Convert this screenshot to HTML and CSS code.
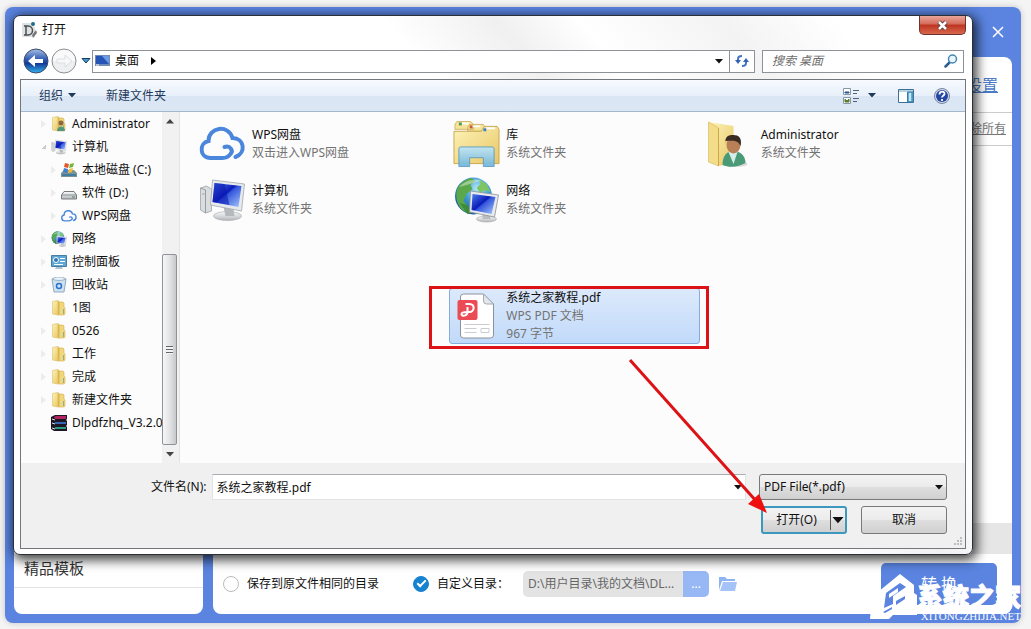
FILE: index.html
```html
<!DOCTYPE html>
<html lang="zh-CN">
<head>
    <meta charset="utf-8">
    <title>打开</title>
    <link rel="stylesheet" href="styles.css">
</head>
<body>

<svg class="defs" aria-hidden="true">
    <defs>
        <linearGradient id="g-folder" x1="0" y1="0" x2="1" y2="1">
            <stop offset="0" stop-color="#fdf3b8"/>
            <stop offset="1" stop-color="#e8c766"/>
        </linearGradient>
        <linearGradient id="g-screen" x1="0" y1="0" x2="1" y2="1">
            <stop offset="0" stop-color="#4f7df0"/>
            <stop offset=".45" stop-color="#0a1cb8"/>
            <stop offset=".5" stop-color="#3355dc"/>
            <stop offset="1" stop-color="#a9c9fb"/>
        </linearGradient>
        <radialGradient id="g-globe" cx=".6" cy=".3" r=".8">
            <stop offset="0" stop-color="#b5eafa"/>
            <stop offset=".45" stop-color="#3d9bd6"/>
            <stop offset="1" stop-color="#134a8c"/>
        </radialGradient>
        <linearGradient id="g-back" x1="0" y1="0" x2="0" y2="1">
            <stop offset="0" stop-color="#a8bfe4"/>
            <stop offset=".45" stop-color="#2c56b0"/>
            <stop offset=".6" stop-color="#123a96"/>
            <stop offset="1" stop-color="#35b4ee"/>
        </linearGradient>
        <linearGradient id="g-metal" x1="0" y1="0" x2="0" y2="1">
            <stop offset="0" stop-color="#fafafa"/>
            <stop offset="1" stop-color="#b4b8bc"/>
        </linearGradient>
        <linearGradient id="g-glass" x1="0" y1="0" x2="0" y2="1">
            <stop offset="0" stop-color="#bfe6f8"/>
            <stop offset="1" stop-color="#6fb5de"/>
        </linearGradient>
        <symbol id="folder" viewBox="0 0 16 16">
            <path d="M7 2h5l1 1v4l1 1v6l-1 1H7z" fill="#f0d67c" stroke="#d3b04e" stroke-width=".6"/>
            <path d="M1.500 1.500 7 .5v14.500l-5.500-1z" fill="url(#g-folder)" stroke="#dcbf62" stroke-width=".6"/>
            <path d="M7 .5 8.500 2v12L7 15z" fill="#d9b550"/>
            <path d="M12.500 9v5" stroke="#8fb08a" stroke-width="1"/>
        </symbol>
        <symbol id="pc" viewBox="0 0 46 42">
            <path d="M1 9 7 7l5 3v22l-6 2-5-3z" fill="#d9dde0" stroke="#9da2a6" stroke-width=".8"/>
            <path d="M1 9l5 2v23M3 15h2" fill="none" stroke="#858b90" stroke-width=".8"/>
            <ellipse cx="28" cy="37" rx="14" ry="4.500" fill="url(#g-metal)" stroke="#a4a8ab" stroke-width=".6"/>
            <path d="m24 28 10 2 1 7h-9z" fill="#b5b9bd"/>
            <path d="m13 1 32 4-3 27-31-6z" fill="#e7eaec" stroke="#a2a7ac" stroke-width=".8"/>
            <path d="m15 4 27 3-3 21-26-5z" fill="url(#g-screen)"/>
            <path d="m15 4 10 1 5 21-17-3z" fill="#0b18b0" opacity=".55"/>
        </symbol>
        <symbol id="globe" viewBox="0 0 46 46">
            <circle cx="20" cy="19" r="18.500" fill="url(#g-globe)"/>
            <path d="M4 11C8 4 14 2 18 1l4 3-5 4 2 4-6 5-3 7 4 5-2 6C4 31 1 20 4 11z" fill="#5ba84b"/>
            <path d="m25 2 8 5 4 8-6-2-4 3-4-5 4-4z" fill="#7fc463"/>
            <path d="M6 26l8 2 4 8-4 1z" fill="#3c8d3a"/>
            <path d="M6 10C11 4 20 1 28 4c-6 1-14 4-22 6z" fill="#fff" opacity=".4"/>
            <ellipse cx="33" cy="42" rx="10" ry="3" fill="url(#g-metal)" stroke="#999" stroke-width=".5"/>
            <path d="m29 36 8 1v5h-8z" fill="#b9bdc0"/>
            <path d="m17 14 28 4-4 22-25-5z" fill="#e8ebed" stroke="#8c9196" stroke-width=".8"/>
            <path d="m19 17 23 3-4 17-20-4z" fill="url(#g-screen)"/>
        </symbol>
        <symbol id="user-folder" viewBox="0 0 42 48">
            <path d="M2 2 27 6v37L12 46z" fill="url(#g-folder)"/>
            <path d="m2 2 10 6v38L2 42z" fill="#f4dd88" stroke="#d6b257" stroke-width=".6"/>
            <path d="M12 8v38" stroke="#c9a043" stroke-width=".8"/>
            <ellipse cx="29" cy="44" rx="12" ry="3" fill="#000" opacity=".15"/>
            <path d="M16 45c0-10 5-14 11-14s12 4 12 12c-7 4-16 5-23 2z" fill="#4a9a78"/>
            <path d="m22 32 5 12 4-12z" fill="#d5efe6"/>
            <ellipse cx="27" cy="25" rx="7" ry="8.500" fill="#b98058"/>
            <path d="M19 24c-1-8 3-9 8-9s9 3 7 11c-2-5-5-6-15-5z" fill="#3a2b23"/>
        </symbol>
        <symbol id="cloud" viewBox="0 0 46 36">
            <path d="M25 21c6-2 9 4 6 7-2 3-5 4-8 4H11C0 32-1 17 9 15 9 1 29-2 33 12c12 0 14 15 3 19" fill="none" stroke="#4a86dc" stroke-width="4" stroke-linecap="round"/>
        </symbol>
        <symbol id="down" viewBox="0 0 8 5">
            <path d="M0 0h8L4 4.500z" fill="currentColor"/>
        </symbol>
    </defs>
</svg>

<div class="app">
    <header class="app-header">
        <button class="app-close" aria-label="关闭程序">
            <svg width="12" height="12" viewBox="0 0 12 12"><path d="m1 1 10 10M11 1 1 11" stroke="#fff" stroke-width="1.500"/></svg>
        </button>
    </header>
    <div class="app-body">
        <aside class="side-panel">
            <h2>精品模板</h2>
        </aside>
        <section class="work-panel">
            <div class="work-top"><a href="#">设置</a></div>
            <div class="work-head"><a href="#">移除所有</a></div>
            <div class="work-list"></div>
            <div class="work-band"></div>
            <form class="output-bar">
                <label class="choice"><input type="radio" name="dir">保存到原文件相同的目录</label>
                <label class="choice"><input type="radio" name="dir" checked>自定义目录：</label>
                <div class="dir-box">
                    <input type="text" aria-label="自定义目录" value="D:\用户目录\我的文档\DL..." readonly>
                    <button type="button">...</button>
                </div>
                <a class="open-dir" href="#" aria-label="打开目录">
                    <svg width="18" height="16" viewBox="0 0 18 16">
                        <path d="M0 14V1h6l2 2h8v2H3z" fill="#8fb4f2"/>
                        <path d="M4 6h14l-2 9H1z" fill="#a5c3f6"/>
                    </svg>
                </a>
                <button type="button" class="convert">转 换</button>
            </form>
        </section>
    </div>
</div>

<div class="dialog" role="dialog" aria-labelledby="dialog-title">
    <header class="titlebar">
        <svg width="16" height="16" viewBox="0 0 16 16">
            <path d="M0 1h9l4 5v9H0z" fill="#dfe2e3"/>
            <path d="M2 4h4c6 0 6 9 0 9H2M4 4v9" fill="none" stroke="#4c4f52" stroke-width="1.500"/>
            <circle cx="11" cy="2" r="2" fill="#236b8c"/>
            <path d="m10 13 4-5 1 3-4 5z" fill="#77797b"/>
        </svg>
        <h1 id="dialog-title">打开</h1>
        <button class="close" aria-label="关闭">
            <svg width="13" height="11" viewBox="0 0 13 11">
                <path d="m3 2 7 7M10 2 3 9" stroke="#5b4040" stroke-width="4.500"/>
                <path d="m3 2 7 7M10 2 3 9" stroke="#fff" stroke-width="2.500"/>
            </svg>
        </button>
    </header>

    <nav class="navbar">
        <button class="round" aria-label="后退">
            <svg width="26" height="26" viewBox="0 0 26 26">
                <circle cx="13" cy="13" r="12" fill="url(#g-back)" stroke="#3b4a68"/>
                <path d="M5 13l7-6v4h8v4h-8v4z" fill="#fff"/>
            </svg>
        </button>
        <button class="round" aria-label="前进">
            <svg width="26" height="26" viewBox="0 0 26 26">
                <circle cx="13" cy="13" r="12" fill="#eeeff0" stroke="#8c9094"/>
                <path d="M2 13a11 11 0 0 1 22 0z" fill="#fafafa"/>
                <path d="M21 13l-7-6v4H6v4h8v4z" fill="#f8f8f8" stroke="#dcdfe1"/>
            </svg>
        </button>
        <button class="history" aria-label="最近浏览">
            <svg width="10" height="6" viewBox="0 0 10 6"><path d="M1 .5h8L5 5z" fill="#3f9bd0" stroke="#1c3c63"/></svg>
        </button>
        <div class="address">
            <svg width="16" height="14" viewBox="0 0 16 14">
                <path d="M0 1h15v11H0z" fill="#6e8cb4"/>
                <path d="M1 2h13v8H1z" fill="#2554b4"/>
                <path d="M7 2h7v8z" fill="#6a9be4"/>
                <path d="M1 11h3" stroke="#fff"/>
            </svg>
            <a href="#">桌面</a>
            <svg class="crumb" width="5" height="8" viewBox="0 0 5 8"><path d="M0 0v8l5-4z"/></svg>
            <button aria-label="展开地址"><svg width="8" height="5"><use href="#down"/></svg></button>
        </div>
        <button class="refresh" aria-label="刷新">
            <svg width="14" height="12" viewBox="0 0 14 12">
                <path d="M3 7V4q0-3 4-3M11 5v3q0 3-4 3" fill="none" stroke="#3f74c8" stroke-width="2"/>
                <path d="M0 5h6L3 9zM8 7h6l-3-4z" fill="#3262b8"/>
            </svg>
        </button>
        <div class="search">
            <input type="text" aria-label="搜索" placeholder="搜索 桌面">
            <svg width="14" height="14" viewBox="0 0 14 14">
                <path d="M1.500 12.500 6 8" stroke="#2b5c92" stroke-width="2.500" stroke-linecap="round"/>
                <circle cx="8.500" cy="5" r="4" fill="#e9f6fc" stroke="#4388b4" stroke-width="1.500"/>
            </svg>
        </div>
    </nav>

    <div class="frame">
        <div class="toolbar">
            <button>组织 <svg width="8" height="5"><use href="#down"/></svg></button>
            <button>新建文件夹</button>
            <button class="view" aria-label="更改视图">
                <svg width="17" height="16" viewBox="0 0 17 16">
                    <path d="M.5.500h7v6h-7zM.5 9.500h7v6h-7z" fill="#fff" stroke="#8796a6"/>
                    <path d="M2 4h4v1H2z" fill="#27548c" stroke="#27548c"/>
                    <path d="m2 11 2 2 2-2v3H2z" fill="#587f2d" stroke="#587f2d"/>
                    <path d="M10 2.500h6M10 5.500h4M10 10.500h6M10 13.500h4" stroke="#4f6379"/>
                </svg>
                <svg width="8" height="5"><use href="#down"/></svg>
            </button>
            <button aria-label="预览窗格">
                <svg width="16" height="14" viewBox="0 0 16 14">
                    <path d="M.5.500h15v13H.5z" fill="#fff" stroke="#3c6e96"/>
                    <path d="M1 1h14v2H1z" fill="#b7d3e6"/>
                    <path d="M9.500 3h5.500v10H9.500z" fill="#62aed2" stroke="#3c7ca4"/>
                    <path d="M11 4h2v8h-2z" fill="#c2e8f6"/>
                </svg>
            </button>
            <button aria-label="帮助">
                <svg width="16" height="16" viewBox="0 0 16 16">
                    <circle cx="8" cy="8" r="7.500" fill="#d5dce8" stroke="#7484a2"/>
                    <circle cx="8" cy="8" r="6" fill="#2446a4"/>
                    <path d="M5.500 6.500c0-4 5.500-3.500 5-.5C10 8 8 7.500 8 9.500M8 11v2" fill="none" stroke="#fff" stroke-width="1.800"/>
                </svg>
            </button>
        </div>

        <div class="main">
            <ul class="tree">
                <li><a href="#"><svg width="16" height="16" viewBox="0 0 16 16"><use href="#folder" width="16" height="16"/><circle cx="10" cy="7" r="2.500" fill="#8d6743"/><path d="M6 15c0-6 8-6 8 0z" fill="#52967c"/></svg>Administrator</a></li>
                <li class="open"><a href="#"><svg width="16" height="16"><use href="#pc"/></svg>计算机</a></li>
                <li class="sub"><a href="#"><svg width="16" height="16" viewBox="0 0 16 16"><path d="M0 11l3-3h10l3 3v4H0z" fill="#7c9298"/><path d="M1 12h14v2H1z" fill="#417d9e"/><path d="m4 1 4 1-1 4-4-1z" fill="#e2572b"/><path d="m9 2 4-1-1 4-4 1z" fill="#76b43c"/><path d="m3 6 4 1-1 4-4-1z" fill="#3e7fd0"/><path d="m8 7 4-1-1 4-4 1z" fill="#f1bd36"/></svg>本地磁盘 (C:)</a></li>
                <li class="sub"><a href="#"><svg width="16" height="16" viewBox="0 0 16 16"><path d="M.5 10 3 6.500h10l2.500 3.500v4H.5z" fill="url(#g-metal)" stroke="#777b7e"/><path d="M1 10h14" stroke="#909497"/><path d="M11 12h3" stroke="#59805d"/></svg>软件 (D:)</a></li>
                <li class="sub"><a href="#"><svg width="16" height="16"><use href="#cloud"/></svg>WPS网盘</a></li>
                <li><a href="#"><svg width="16" height="16"><use href="#globe"/></svg>网络</a></li>
                <li><a href="#"><svg width="16" height="16" viewBox="0 0 16 16"><path d="M.5 1.500h15v11H.5z" fill="#5ea6d4" stroke="#487ea4"/><circle cx="5" cy="6" r="2.500" fill="#2b77b4" stroke="#fff"/><path d="M9 4.500h5M9 7.500h5M3 10.500h9" stroke="#fff"/><path d="m5 13-1 2h8l-1-2z" fill="#b0c4d0"/></svg>控制面板</a></li>
                <li><a href="#"><svg width="16" height="16" viewBox="0 0 16 16"><path d="M1 2h14l-2 13H3z" fill="#cfe1ef" stroke="#8fabc0"/><path d="M1 2c3 2 11 2 14 0L11 0H5z" fill="#e9f2f8" stroke="#9ab3c5"/><circle cx="8" cy="9" r="2.500" fill="none" stroke="#2a73cc" stroke-width="1.500"/></svg>回收站</a></li>
                <li class="leaf"><a href="#"><svg width="16" height="16"><use href="#folder"/></svg>1图</a></li>
                <li><a href="#"><svg width="16" height="16"><use href="#folder"/></svg>0526</a></li>
                <li><a href="#"><svg width="16" height="16"><use href="#folder"/></svg>工作</a></li>
                <li><a href="#"><svg width="16" height="16"><use href="#folder"/></svg>完成</a></li>
                <li><a href="#"><svg width="16" height="16"><use href="#folder"/></svg>新建文件夹</a></li>
                <li class="leaf"><a href="#"><svg width="16" height="16" viewBox="0 0 16 16"><path d="M0 2 4 0h12v4l-1 1 1 1v4l-1 1 1 1v4H3l-3-2z" fill="#1b1824"/><path d="m3 2 2-1h10v3H4z" fill="#b32461"/><path d="M4 7h11v2H4z" fill="#3766b4"/><path d="M4 12h11v2H4z" fill="#2c9b84"/><path d="m1 4 3 1M1 8l3 1M1 13l3 1" stroke="#e5dfe8"/></svg>Dlpdfzhq_V3.2.0</a></li>
            </ul>
            <div class="scrollbar">
                <svg width="8" height="5" viewBox="0 0 8 5"><path d="M0 4.500h8L4 0z" fill="#444"/></svg>
                <div class="thumb"><i></i></div>
                <svg width="8" height="5"><use href="#down"/></svg>
            </div>

            <div class="files">
                <a class="file" href="#">
                    <svg width="46" height="36" viewBox="0 0 46 36"><use href="#cloud"/></svg>
                    <span><b>WPS网盘</b>双击进入WPS网盘</span>
                </a>
                <a class="file" href="#">
                    <svg width="48" height="48" viewBox="0 0 48 48">
                        <path d="M2 4 4 1h14l3 3v5H2zM15 7l2-3h14l2 3v4H15z" fill="#f5e397" stroke="#c9a857" stroke-width=".8"/>
                        <path d="M30 9l2-3h13l2 3v35H1V11h28z" fill="url(#g-folder)" stroke="#cba852"/>
                        <path d="M7 3h9M19 6h9M34 8h9" stroke="#fff" stroke-width="2"/>
                        <path d="M6 2h3v3H6z" fill="#4c9854"/><path d="M17 5h3v3h-3z" fill="#c75b35"/><path d="M31 8h3v3h-3z" fill="#3a84c4"/>
                        <path d="M6 29q0-2 2-2h32q2 0 2 2v18H31V38H17v9H6z" fill="url(#g-glass)" stroke="#5c9dc0" opacity=".93"/>
                    </svg>
                    <span><b>库</b>系统文件夹</span>
                </a>
                <a class="file" href="#">
                    <svg width="42" height="48" viewBox="4 0 42 48"><use href="#user-folder" width="42" height="48"/></svg>
                    <span><b>Administrator</b>系统文件夹</span>
                </a>
                <a class="file" href="#">
                    <svg width="46" height="42" viewBox="0 0 46 42"><use href="#pc"/></svg>
                    <span><b>计算机</b>系统文件夹</span>
                </a>
                <a class="file" href="#">
                    <svg width="46" height="46" viewBox="0 0 46 46"><use href="#globe"/></svg>
                    <span><b>网络</b>系统文件夹</span>
                </a>
                <a class="file selected" href="#">
                    <svg width="40" height="46" viewBox="0 0 40 46">
                        <path d="M7 1h20l10 10v31q0 3-3 3H7q-3 0-3-3V4q0-3 3-3z" fill="#fff" stroke="#8c929a"/>
                        <path d="M27 1v7q0 3 3 3h7z" fill="#e3e6ea" stroke="#a5abb2"/>
                        <rect x="1" y="7" width="20" height="20" rx="2" fill="#ea4b54"/>
                        <path d="M9 11h4c6 0 5 8 0 8h-2V14M11 19c0 4-6 5-6 2 0-2 3-2 6-2" fill="none" stroke="#fff" stroke-width="2"/>
                        <path d="M8 31.500h25M8 35.500h12M8 39.500h12M24.500 35.500h8v4h-8z" fill="none" stroke="#c9cdd1"/>
                    </svg>
                    <span><b>系统之家教程.pdf</b>WPS PDF 文档<br>967 字节</span>
                </a>
            </div>
        </div>

        <form class="footer">
            <div class="row">
                <label for="filename">文件名(N):</label>
                <div class="combo name">
                    <input id="filename" type="text" value="系统之家教程.pdf">
                    <svg width="8" height="5"><use href="#down"/></svg>
                </div>
                <div class="combo type">
                    <select aria-label="文件类型"><option>PDF File(*.pdf)</option></select>
                    <svg width="8" height="5"><use href="#down"/></svg>
                </div>
            </div>
            <div class="row">
                <div class="split">
                    <button type="button">打开(O)</button>
                    <button type="button" class="more" aria-label="打开方式"><svg width="12" height="7" viewBox="0 0 8 5"><use href="#down" width="8" height="5"/></svg></button>
                </div>
                <button type="button" class="cancel">取消</button>
            </div>
            <svg class="grip" width="9" height="9" viewBox="0 0 9 9"><path d="M6 0h2v2H6zM3 3h2v2H3zM6 3h2v2H6zM0 6h2v2H0zM3 6h2v2H3zM6 6h2v2H6z" fill="#bdbdbd"/></svg>
        </form>
    </div>

    <svg class="marks" width="340" height="240" viewBox="0 0 340 240">
        <rect x="1.500" y="2.500" width="277" height="60" fill="none" stroke="#dd1216" stroke-width="3"/>
        <path d="M201 75 328 217" stroke="#dd1216" stroke-width="3"/>
        <path d="m338 228-19-9 11-10z" fill="#f00f0f"/>
    </svg>
</div>

<div class="watermark">
    <svg width="48" height="46" viewBox="0 0 48 46">
        <path d="M9 18 31 0l14 11v8l3 2v20H24l-4 4H1l1-13 6-1 2-6H6z" fill="#fff"/>
        <path d="m17 19 14-10 6 4-13 9v8l-9 4z" fill="#5a84e0"/>
        <path d="m20 20 9-6v4l-9 6z" fill="#fff"/>
        <path d="m27 27 9-5v3l-9 6zM14 38l9-5v2l-7 4z" fill="#5a84e0"/>
    </svg>
    <p><strong>系统之家</strong>XITONGZHIJIA.NET</p>
</div>

</body>
</html>
```
FILE: styles.css
```css
* {
    box-sizing: border-box;
}

body {
    margin: 0;
    padding: 7px 10px 6px 5px;
    min-height: 100vh;
    position: relative;
    background-color: #f4f4f5;
    color: #111;
    font: 12px/18px "Noto Sans", "Noto Sans CJK SC", sans-serif;
}

button, input, select {
    font: inherit;
    color: inherit;
}

button {
    border: 0;
    padding: 0;
    background: none;
    display: flex;
    align-items: center;
    justify-content: center;
}

a {
    color: inherit;
    text-decoration: none;
}

svg {
    flex-shrink: 0;
    display: block;
}

.defs {
    position: absolute;
    width: 0;
    height: 0;
}

/* main program behind the dialog */
.app {
    min-height: calc(100vh - 13px);
    padding: 0 9px 9px;
    display: flex;
    flex-direction: column;
    background-color: #5a84e0;
    border-radius: 8px;
    box-shadow: 0 0 6px rgba(0, 0, 0, .2);
}

.app-header {
    height: 50px;
    display: flex;
    align-items: center;
    justify-content: flex-end;
    padding-right: 8px;
}

.app-body {
    flex: 1;
    display: grid;
    grid-template-columns: 189px 1fr;
    gap: 10px;
}

.side-panel, .work-panel {
    display: flex;
    flex-direction: column;
    background-color: #fff;
    border-radius: 8px;
}

.side-panel {
    justify-content: flex-end;
    padding-bottom: 26px;
}

.side-panel h2 {
    margin: 0;
    padding: 0 10px 8px;
    border-bottom: 1px solid #e4e4e4;
    font-size: 15px;
    line-height: 22px;
    font-weight: normal;
    color: #333;
}

.work-top, .work-head {
    display: flex;
    align-items: center;
    justify-content: flex-end;
    border-bottom: 1px solid #ccc;
}

.work-top a, .work-head a {
    text-decoration: underline;
}

.work-top {
    height: 56px;
    padding-right: 14px;
    font-size: 16px;
    color: #4a7bc4;
}

.work-head {
    height: 33px;
    padding-right: 6px;
    color: #777;
}

.work-list {
    flex: 1;
}

.work-band {
    height: 31px;
    background-color: #e6e6e6;
}

.output-bar {
    height: 60px;
    padding: 0 15px 0 10px;
    display: flex;
    align-items: center;
}

.choice {
    display: flex;
    align-items: center;
    gap: 8px;
    margin-right: 34px;
}

.choice + .choice {
    margin-right: 14px;
}

.choice input {
    appearance: none;
    width: 16px;
    height: 16px;
    margin: 0;
    border: 1px solid #bbb;
    border-radius: 50%;
    display: grid;
    place-items: center;
}

.choice input:checked {
    background-color: #1782d0;
    border-color: #1782d0;
}

.choice input:checked::after {
    content: "";
    width: 7px;
    height: 3px;
    margin-bottom: 3px;
    border: solid #fff;
    border-width: 0 0 2px 2px;
    transform: rotate(-45deg);
}

.dir-box {
    display: flex;
    height: 26px;
    border-radius: 5px;
    overflow: hidden;
}

.dir-box input {
    width: 160px;
    border: 0;
    padding: 0 5px;
    background-color: #e3e3e3;
    color: #666;
}

.dir-box button {
    width: 26px;
    background-color: #98b8f5;
    color: #fff;
}

.open-dir {
    margin-left: 10px;
}

.convert {
    width: 116px;
    height: 42px;
    margin-left: auto;
    border-radius: 5px;
    background-color: #5a84e0;
    color: #fff;
    font-size: 16px;
}

/* file dialog */
.dialog {
    position: absolute;
    top: 15px;
    left: 13px;
    right: 58px;
    padding: 0 6px 5px;
    border: 1px solid #2b2f38;
    border-radius: 7px;
    background: linear-gradient(50deg, #fff 58%, #f0f0f0 66%, #fff 72%, #f3f3f3 82%, #fff 90%);
    box-shadow: 2px 3px 12px 2px rgba(0, 0, 0, .75);
}

.titlebar {
    height: 27px;
    padding-left: 2px;
    display: flex;
    align-items: center;
    gap: 4px;
}

.titlebar h1 {
    margin: 0;
    font-size: 12px;
    font-weight: normal;
}

.close {
    width: 47px;
    height: 19px;
    margin-left: auto;
    align-self: flex-start;
    border: 1px solid #6b3330;
    border-top: 0;
    border-radius: 0 0 5px 5px;
    background: linear-gradient(#e8a79b, #d4695a 45%, #bd3421 50%, #d8674b);
}

.navbar {
    height: 36px;
    padding: 0 2px 0 3px;
    display: flex;
    align-items: center;
}

.round {
    margin-right: 2px;
}

.history {
    width: 13px;
    height: 24px;
}

.address, .refresh, .search {
    height: 23px;
    border: 1px solid #8e9297;
    background-color: #fff;
}

.address {
    flex: 1;
    display: flex;
    align-items: center;
    padding: 0 6px 0 2px;
    gap: 4px;
}

.crumb {
    margin-left: 8px;
}

.address button {
    margin-left: auto;
}

.refresh {
    width: 25px;
    border-left: 0;
}

.search {
    width: 202px;
    margin-left: 7px;
    padding: 0 5px 0 9px;
    display: flex;
    align-items: center;
}

.search input {
    flex: 1;
    min-width: 0;
    border: 0;
    padding: 0;
    outline: 0;
}

.search input::placeholder {
    color: #6d6d6d;
    font-style: italic;
}

.frame {
    border: 1px solid #73777c;
}

.toolbar {
    height: 32px;
    padding: 0 15px 0 18px;
    display: flex;
    align-items: center;
    background: linear-gradient(#f7fafe, #e8f0fa 50%, #dae6f4 52%, #dce7f5);
    border-bottom: 1px solid #a5b7cc;
    color: #1e395b;
}

.toolbar button {
    gap: 5px;
    margin-right: 20px;
}

.toolbar button + button {
    margin-left: 10px;
}

.toolbar button.view {
    margin-left: auto;
    margin-right: 12px;
    gap: 8px;
}

.toolbar button:last-child {
    margin-left: 0;
    margin-right: 0;
}

.main {
    display: flex;
    background-color: #fcfcfc;
}

.tree {
    width: 141px;
    margin: 0;
    padding: 0 0 29px;
    list-style: none;
    overflow: hidden;
}

.tree li {
    height: 23px;
    padding-left: 20px;
    display: flex;
    align-items: center;
    white-space: nowrap;
}

.tree li::before {
    content: "";
    margin-right: 5px;
    border: solid transparent;
    border-width: 4px 0 4px 5px;
    border-left-color: #ececec;
}

.tree li.sub {
    padding-left: 30px;
}

.tree li.leaf::before {
    border-left-color: transparent;
}

.tree li.open::before {
    border-width: 5px 0 0 5px;
    border-left-color: transparent;
    border-bottom: 0;
    background: linear-gradient(135deg, transparent 50%, #ccc 50%) border-box;
}

.tree a {
    display: flex;
    align-items: center;
    gap: 5px;
}

.scrollbar {
    width: 18px;
    padding: 7px 2px 6px 0;
    display: flex;
    flex-direction: column;
    align-items: center;
    background-color: #f1f1f1;
    border-right: 1px solid #e3e3e3;
    color: #444;
}

.thumb {
    width: 15px;
    height: 191px;
    margin: auto 0 7px;
    display: grid;
    place-items: center;
    border: 1px solid #8f9398;
    border-radius: 2px;
    background: linear-gradient(90deg, #f7f7f7, #e4e4e6 50%, #c7c8cc);
}

.thumb i {
    width: 7px;
    height: 8px;
    background: repeating-linear-gradient(#666 0 1px, #f4f4f4 1px 3px);
}

.files {
    flex: 1;
    padding: 4px 7px 0 15px;
    display: grid;
    grid-template-columns: repeat(3, 1fr);
    grid-template-rows: 56px 56px 60px 56px;
}

.file {
    margin-right: 4px;
    padding-left: 4px;
    display: flex;
    align-items: center;
    color: #737373;
}

.file > svg {
    width: 47px;
    margin-right: 6px;
}

.file b {
    display: block;
    font-weight: normal;
    color: #111;
}

.file.selected {
    grid-column: 2;
    grid-row: 4;
    border: 1px solid #84acdd;
    border-radius: 3px;
    padding-left: 3px;
    background: linear-gradient(#dce9fb, #c1dafa);
}

.footer {
    position: relative;
    padding: 11px 18px 14px;
    background-color: #f0f0f0;
}

.row {
    display: flex;
    align-items: center;
    justify-content: flex-end;
}

.row + .row {
    margin-top: 6px;
    gap: 14px;
}

.row label {
    margin-right: 5px;
    margin-left: 112px;
}

.combo {
    position: relative;
}

.combo input, .combo select {
    appearance: none;
    display: block;
    width: 100%;
    height: 26px;
    padding: 0 4px;
    border: 1px solid #e2e3e6;
    border-top-color: #abadb3;
    background-color: #fff;
}

.combo select {
    border: 1px solid #77797c;
    border-radius: 3px;
    background: linear-gradient(#f3f3f3, #ebebeb 50%, #dedede 52%, #d0d0d0);
}

.combo svg {
    position: absolute;
    right: 4px;
    top: 11px;
}

.name {
    flex: 1;
    margin-right: 13px;
}

.type {
    width: 188px;
}

.split, .cancel {
    width: 86px;
    height: 28px;
    border: 1px solid #77797c;
    border-radius: 3px;
    background: linear-gradient(#f3f3f3, #ebebeb 50%, #dedede 52%, #d0d0d0);
}

.split {
    display: flex;
    border: 2px solid #3d98bd;
}

.split button {
    flex: 1;
}

.split .more {
    flex: none;
    width: 15px;
    margin: 2px 0;
    border-left: 1px solid #555;
}

.grip {
    position: absolute;
    right: 2px;
    bottom: 2px;
}

.marks {
    position: absolute;
    left: 415px;
    top: 269px;
    pointer-events: none;
}

/* site mark */
.watermark {
    position: absolute;
    right: 10px;
    bottom: 7px;
    display: flex;
    align-items: flex-end;
    color: #fff;
}

.watermark svg {
    margin-bottom: 2px;
}

.watermark p {
    margin: 0;
    font: 11px/12px "Liberation Serif", serif;
    text-align: right;
}

.watermark strong {
    display: block;
    font: 900 26px/29px "Noto Sans CJK SC", sans-serif;
    -webkit-text-stroke: 1px #fff;
}
```
